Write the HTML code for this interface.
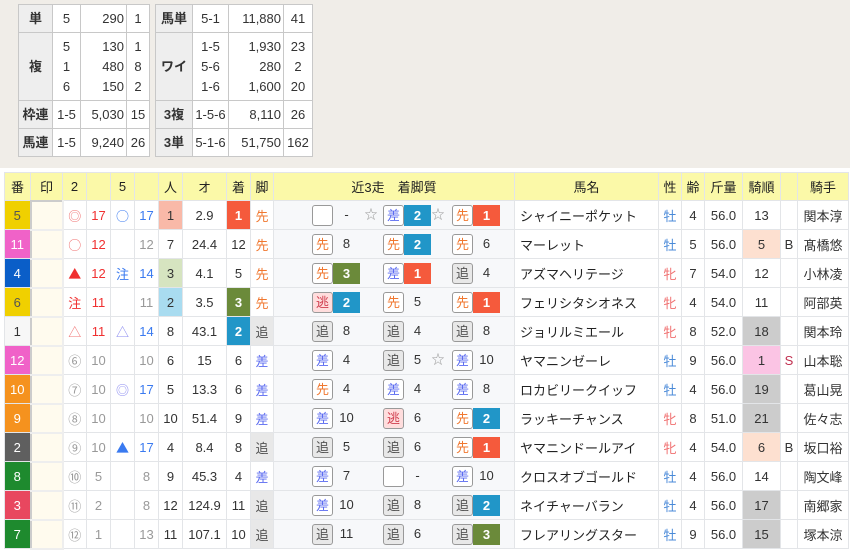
<!DOCTYPE html>
<html><head><meta charset="utf-8"><style>
*{box-sizing:border-box;margin:0;padding:0}
body{width:850px;height:551px;overflow:hidden;background:#fff;font-family:"Liberation Sans","Noto Sans CJK JP",sans-serif;color:#333;font-size:13px}
#top{position:absolute;left:0;top:0;width:850px;height:168px;background:#f0ede8}
.pt{position:absolute;top:4px;border-collapse:collapse;background:#fff;font-size:13px;table-layout:fixed}
.pt td{border:1px solid #c8c8c8;height:28px;padding:0 2px;line-height:20px;white-space:nowrap;text-align:center}
.pt td.h{background:#eeeeee;font-weight:bold}
.pt td.r{text-align:right}
#m{position:absolute;left:4px;top:172px;border-collapse:collapse;table-layout:fixed;width:844px}
#m td,#m th{border:1px solid #e3e5e8;height:29px;text-align:center;padding:0;white-space:nowrap;overflow:hidden}
#m th{background:#fbf9a8;height:28px;font-weight:normal;color:#222}
.w1{background:#f7f7f7;color:#333}.w2{background:#5f5f5f;color:#fff}.w3{background:#e8475f;color:#fff}.w4{background:#0a5ec8;color:#fff}.w5{background:#f0d000;color:#555}.w6{background:#1e8a2e;color:#fff}.w7{background:#f5921e;color:#fff}.w8{background:#f062c8;color:#fff}
#m td.mk{background:#fffbee;border:2px solid #ccc;border-right-color:#eee;border-bottom-color:#eee}
.sy{font-family:"Noto Sans CJK JP",sans-serif;font-size:13px}
.red{color:#f03030}.lr{color:#f07070}.blu{color:#3a7af0}.lb{color:#8a8af0}.gr{color:#999}
.pk{background:#f9b9a8}.pb{background:#a9dcf0}.pg{background:#d6e4c0}
#m td.R1{background:#f55a3c;color:#fff;font-weight:bold}#m td.R2{background:#2196c8;color:#fff;font-weight:bold}#m td.R3{background:#6b8a3a;color:#fff;font-weight:bold}
.sen{color:#f07830}.sas{color:#5a6af0}#m td.oi{background:#e8e8e8;color:#555}
#m td.run{background:#f7f8fa;position:relative;text-align:left}
.run span{position:absolute;top:4px;height:21px;line-height:19px;text-align:center;font-size:13px}
.b{width:21px;border:1px solid #999;border-radius:3px;background:#fff}
.b.o{background:#e8e8e8;color:#555}.b.n{background:#fdd;color:#d04050}.b.s{color:#f07830}.b.a{color:#5a6af0}
.g{width:27px;color:#fff;font-weight:bold;line-height:21px!important}
.g1{background:#f55a3c}.g2{background:#2196c8}.g3{background:#6b8a3a}
.q1{left:38px}.q2{left:109px}.q3{left:178px}.x1{left:59px;width:27px}.x2{left:130px;width:27px}.x3{left:199px;width:27px}
.s2{left:89px;width:16px;color:#999}.s3{left:156px;width:16px;color:#999}
#m td.nm{text-align:left;padding-left:5px;color:#222}
.ms{color:#f07070}.fs{color:#4a8ad8}
#m td.jg{background:#ccc}#m td.jp{background:#fbc4e4}#m td.jo{background:#fde0d0}
.S{color:#c03050}
</style></head><body>
<div id="top"></div>
<table class="pt" style="left:18px;width:131px">
<colgroup><col style="width:34px"><col style="width:28px"><col style="width:46px"><col style="width:23px"></colgroup>
<tr><td class="h">単</td><td>5</td><td class="r">290</td><td>1</td></tr>
<tr><td class="h" style="height:68px">複</td><td>5<br>1<br>6</td><td class="r">130<br>480<br>150</td><td>1<br>8<br>2</td></tr>
<tr><td class="h">枠連</td><td>1-5</td><td class="r">5,030</td><td>15</td></tr>
<tr><td class="h">馬連</td><td>1-5</td><td class="r">9,240</td><td>26</td></tr>
</table>
<table class="pt" style="left:155px;width:157px">
<colgroup><col style="width:37px"><col style="width:36px"><col style="width:55px"><col style="width:29px"></colgroup>
<tr><td class="h">馬単</td><td>5-1</td><td class="r">11,880</td><td>41</td></tr>
<tr><td class="h" style="height:68px">ワイ</td><td>1-5<br>5-6<br>1-6</td><td class="r">1,930<br>280<br>1,600</td><td>23<br>2<br>20</td></tr>
<tr><td class="h">3複</td><td>1-5-6</td><td class="r">8,110</td><td>26</td></tr>
<tr><td class="h">3単</td><td>5-1-6</td><td class="r">51,750</td><td>162</td></tr>
</table>
<table id="m">
<colgroup><col style="width:26px"><col style="width:32px"><col style="width:24px"><col style="width:24px"><col style="width:24px"><col style="width:24px"><col style="width:24px"><col style="width:44px"><col style="width:24px"><col style="width:23px"><col style="width:241px"><col style="width:144px"><col style="width:23px"><col style="width:23px"><col style="width:38px"><col style="width:38px"><col style="width:17px"><col style="width:51px"></colgroup>
<tr><th>番</th><th>印</th><th>2</th><th></th><th>5</th><th></th><th>人</th><th>オ</th><th>着</th><th>脚</th><th>近3走　着脚質</th><th>馬名</th><th>性</th><th>齢</th><th>斤量</th><th>騎順</th><th></th><th>騎手</th></tr>
<tr><td class="w5">5</td><td class="mk"></td><td class="lr sy">◎</td><td class="red">17</td><td class="blu sy">○</td><td class="blu">17</td><td class="pk">1</td><td>2.9</td><td class="R1">1</td><td class="sen">先</td>
<td class="run"><span class="b q1"></span><span class="x1">-</span><span class="s2">☆</span><span class="b a q2">差</span><span class="g g2 x2">2</span><span class="s3">☆</span><span class="b s q3">先</span><span class="g g1 x3">1</span></td>
<td class="nm">シャイニーポケット</td><td class="fs">牡</td><td>4</td><td>56.0</td><td>13</td><td></td><td>関本淳</td></tr>
<tr><td class="w8">11</td><td class="mk"></td><td class="lr sy">○</td><td class="red">12</td><td></td><td class="gr">12</td><td>7</td><td>24.4</td><td>12</td><td class="sen">先</td>
<td class="run"><span class="b s q1">先</span><span class="x1">8</span><span class="b s q2">先</span><span class="g g2 x2">2</span><span class="b s q3">先</span><span class="x3">6</span></td>
<td class="nm">マーレット</td><td class="fs">牡</td><td>5</td><td>56.0</td><td class="jo">5</td><td>B</td><td>髙橋悠</td></tr>
<tr><td class="w4">4</td><td class="mk"></td><td class="red sy">▲</td><td class="red">12</td><td class="blu">注</td><td class="blu">14</td><td class="pg">3</td><td>4.1</td><td>5</td><td class="sen">先</td>
<td class="run"><span class="b s q1">先</span><span class="g g3 x1">3</span><span class="b a q2">差</span><span class="g g1 x2">1</span><span class="b o q3">追</span><span class="x3">4</span></td>
<td class="nm">アズマヘリテージ</td><td class="ms">牝</td><td>7</td><td>54.0</td><td>12</td><td></td><td>小林凌</td></tr>
<tr><td class="w5">6</td><td class="mk"></td><td class="red">注</td><td class="red">11</td><td></td><td class="gr">11</td><td class="pb">2</td><td>3.5</td><td class="R3">3</td><td class="sen">先</td>
<td class="run"><span class="b n q1">逃</span><span class="g g2 x1">2</span><span class="b s q2">先</span><span class="x2">5</span><span class="b s q3">先</span><span class="g g1 x3">1</span></td>
<td class="nm">フェリシタシオネス</td><td class="ms">牝</td><td>4</td><td>54.0</td><td>11</td><td></td><td>阿部英</td></tr>
<tr><td class="w1">1</td><td class="mk"></td><td class="lr sy">△</td><td class="red">11</td><td class="lb sy">△</td><td class="blu">14</td><td>8</td><td>43.1</td><td class="R2">2</td><td class="oi">追</td>
<td class="run"><span class="b o q1">追</span><span class="x1">8</span><span class="b o q2">追</span><span class="x2">4</span><span class="b o q3">追</span><span class="x3">8</span></td>
<td class="nm">ジョリルミエール</td><td class="ms">牝</td><td>8</td><td>52.0</td><td class="jg">18</td><td></td><td>関本玲</td></tr>
<tr><td class="w8">12</td><td class="mk"></td><td class="gr sy">⑥</td><td class="gr">10</td><td></td><td class="gr">10</td><td>6</td><td>15</td><td>6</td><td class="sas">差</td>
<td class="run"><span class="b a q1">差</span><span class="x1">4</span><span class="b o q2">追</span><span class="x2">5</span><span class="s3">☆</span><span class="b a q3">差</span><span class="x3">10</span></td>
<td class="nm">ヤマニンゼーレ</td><td class="fs">牡</td><td>9</td><td>56.0</td><td class="jp">1</td><td class="S">S</td><td>山本聡</td></tr>
<tr><td class="w7">10</td><td class="mk"></td><td class="gr sy">⑦</td><td class="gr">10</td><td class="lb sy">◎</td><td class="blu">17</td><td>5</td><td>13.3</td><td>6</td><td class="sas">差</td>
<td class="run"><span class="b s q1">先</span><span class="x1">4</span><span class="b a q2">差</span><span class="x2">4</span><span class="b a q3">差</span><span class="x3">8</span></td>
<td class="nm">ロカビリークイッフ</td><td class="fs">牡</td><td>4</td><td>56.0</td><td class="jg">19</td><td></td><td>葛山晃</td></tr>
<tr><td class="w7">9</td><td class="mk"></td><td class="gr sy">⑧</td><td class="gr">10</td><td></td><td class="gr">10</td><td>10</td><td>51.4</td><td>9</td><td class="sas">差</td>
<td class="run"><span class="b a q1">差</span><span class="x1">10</span><span class="b n q2">逃</span><span class="x2">6</span><span class="b s q3">先</span><span class="g g2 x3">2</span></td>
<td class="nm">ラッキーチャンス</td><td class="ms">牝</td><td>8</td><td>51.0</td><td class="jg">21</td><td></td><td>佐々志</td></tr>
<tr><td class="w2">2</td><td class="mk"></td><td class="gr sy">⑨</td><td class="gr">10</td><td class="blu sy">▲</td><td class="blu">17</td><td>4</td><td>8.4</td><td>8</td><td class="oi">追</td>
<td class="run"><span class="b o q1">追</span><span class="x1">5</span><span class="b o q2">追</span><span class="x2">6</span><span class="b s q3">先</span><span class="g g1 x3">1</span></td>
<td class="nm">ヤマニンドールアイ</td><td class="ms">牝</td><td>4</td><td>54.0</td><td class="jo">6</td><td>B</td><td>坂口裕</td></tr>
<tr><td class="w6">8</td><td class="mk"></td><td class="gr sy">⑩</td><td class="gr">5</td><td></td><td class="gr">8</td><td>9</td><td>45.3</td><td>4</td><td class="sas">差</td>
<td class="run"><span class="b a q1">差</span><span class="x1">7</span><span class="b q2"></span><span class="x2">-</span><span class="b a q3">差</span><span class="x3">10</span></td>
<td class="nm">クロスオブゴールド</td><td class="fs">牡</td><td>4</td><td>56.0</td><td>14</td><td></td><td>陶文峰</td></tr>
<tr><td class="w3">3</td><td class="mk"></td><td class="gr sy">⑪</td><td class="gr">2</td><td></td><td class="gr">8</td><td>12</td><td>124.9</td><td>11</td><td class="oi">追</td>
<td class="run"><span class="b a q1">差</span><span class="x1">10</span><span class="b o q2">追</span><span class="x2">8</span><span class="b o q3">追</span><span class="g g2 x3">2</span></td>
<td class="nm">ネイチャーバラン</td><td class="fs">牡</td><td>4</td><td>56.0</td><td class="jg">17</td><td></td><td>南郷家</td></tr>
<tr><td class="w6">7</td><td class="mk"></td><td class="gr sy">⑫</td><td class="gr">1</td><td></td><td class="gr">13</td><td>11</td><td>107.1</td><td>10</td><td class="oi">追</td>
<td class="run"><span class="b o q1">追</span><span class="x1">11</span><span class="b o q2">追</span><span class="x2">6</span><span class="b o q3">追</span><span class="g g3 x3">3</span></td>
<td class="nm">フレアリングスター</td><td class="fs">牡</td><td>9</td><td>56.0</td><td class="jg">15</td><td></td><td>塚本涼</td></tr>
</table>
</body></html>
